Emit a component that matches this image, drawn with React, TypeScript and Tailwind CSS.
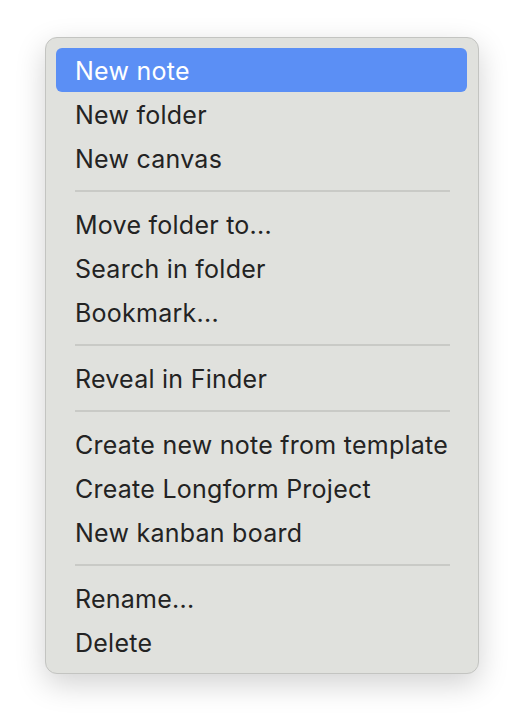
import React from 'react';

type Item = { label: string; active?: boolean } | 'sep';

const items: Item[] = [
  { label: 'New note', active: true },
  { label: 'New folder' },
  { label: 'New canvas' },
  'sep',
  { label: 'Move folder to...' },
  { label: 'Search in folder' },
  { label: 'Bookmark...' },
  'sep',
  { label: 'Reveal in Finder' },
  'sep',
  { label: 'Create new note from template' },
  { label: 'Create Longform Project' },
  { label: 'New kanban board' },
  'sep',
  { label: 'Rename...' },
  { label: 'Delete' },
];

export default function App() {
  return (
    <div className="w-[524px] h-[728px] bg-white pt-[37px] pl-[45px]" style={{ fontFamily: 'Inter, "Noto Sans", sans-serif' }}>
      <div className="w-[434px] h-[637px] rounded-[12px] border border-[#c3c4c1] bg-[#e0e1dd] pt-[10px] pb-[8px] pl-[10px] pr-[11px] shadow-[0_10px_30px_rgba(0,0,0,0.18)]">
        {items.map((item, i) =>
          item === 'sep' ? (
            <div key={i} className="h-[22px] flex items-center pl-[19px] pr-[17px]">
              <div className="h-[2px] w-full bg-[#c9cac6]" />
            </div>
          ) : (
            <div
              key={i}
              className={`h-[44px] flex items-center pl-[19px] pt-[4px] rounded-[6px] text-[25px] tracking-[0.25px] ${
                item.active ? 'bg-[#5b8ff5] text-white' : 'text-[#232323]'
              }`}
            >
              {item.label}
            </div>
          )
        )}
      </div>
    </div>
  );
}
